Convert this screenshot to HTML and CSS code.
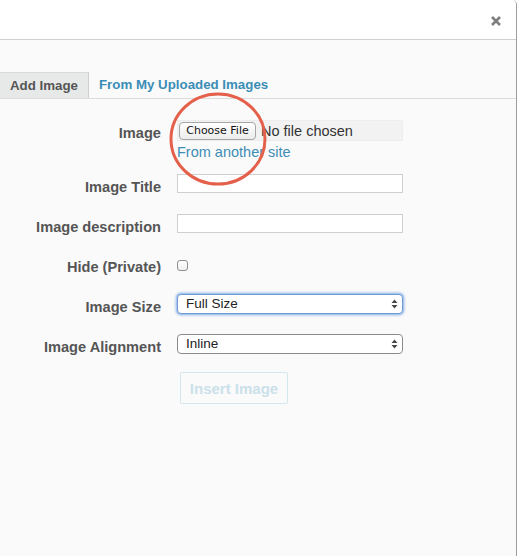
FILE: index.html
```html
<!DOCTYPE html>
<html>
<head>
<meta charset="utf-8">
<link rel="stylesheet" href="styles.css">
</head>
<body>
<div class="modal">
  <div class="modal-header">
    <svg class="close" width="10" height="10" viewBox="0 0 10 10"><path d="M1 1 L9 9 M9 1 L1 9" stroke="#7f7f7f" stroke-width="2.6" stroke-linecap="butt"/></svg>
  </div>
  <div class="modal-body">
    <div class="tabs">
      <div class="tab active">Add Image</div>
      <div class="tab">From My Uploaded Images</div>
    </div>
    <div class="form">
      <div class="row row-image">
        <div class="label">Image</div>
        <div class="control">
          <div class="filebox">
            <span class="choose">Choose File</span>
            <span class="nofile">No file chosen</span>
          </div>
          <a class="link">From another site</a>
        </div>
      </div>
      <div class="row">
        <div class="label">Image Title</div>
        <div class="control"><div class="text-input"></div></div>
      </div>
      <div class="row">
        <div class="label">Image description</div>
        <div class="control"><div class="text-input"></div></div>
      </div>
      <div class="row">
        <div class="label">Hide (Private)</div>
        <div class="control"><span class="checkbox"></span></div>
      </div>
      <div class="row">
        <div class="label">Image Size</div>
        <div class="control">
          <div class="select focused">
            <span>Full Size</span>
            <svg class="arrows" width="7" height="10" viewBox="0 0 7 10"><path d="M3.5 0.5 L6.5 4 L0.5 4 Z M3.5 9.5 L6.5 6 L0.5 6 Z" fill="#444"/></svg>
          </div>
        </div>
      </div>
      <div class="row">
        <div class="label">Image Alignment</div>
        <div class="control">
          <div class="select">
            <span>Inline</span>
            <svg class="arrows" width="7" height="10" viewBox="0 0 7 10"><path d="M3.5 0.5 L6.5 4 L0.5 4 Z M3.5 9.5 L6.5 6 L0.5 6 Z" fill="#444"/></svg>
          </div>
        </div>
      </div>
      <div class="actions">
        <button class="insert" disabled>Insert Image</button>
      </div>
    </div>
    <svg class="circle" width="104" height="100" viewBox="0 0 104 100"><ellipse cx="52" cy="50" rx="47" ry="45" fill="none" stroke="#e4604b" stroke-width="3"/></svg>
  </div>
</div>
</body>
</html>
```

FILE: styles.css
```css
html, body {
  margin: 0;
  padding: 0;
  background: #fff;
  font-family: "Liberation Sans", Arial, sans-serif;
}

.modal {
  width: 516px;
  height: 556px;
  border-right: 1px solid #9c9c9c;
  border-top-right-radius: 5px;
  background: #fafafa;
  overflow: hidden;
}

.modal-header {
  height: 39px;
  background: #fff;
  border-bottom: 1px solid #cfcfcf;
  display: flex;
  justify-content: flex-end;
  align-items: flex-start;
}

.close {
  margin-top: 16px;
  margin-right: 15px;
}

.modal-body {
  position: relative;
  padding-top: 32px;
}

.tabs {
  display: flex;
  height: 26px;
  border-bottom: 1px solid #dcdcdc;
}

.tab {
  font-size: 13.3px;
  font-weight: bold;
  line-height: 26px;
  padding: 0 11px 0 10px;
  color: #3a8db6;
}

.tab.active {
  color: #555;
  background: #e7e8e8;
  border-top: 1px solid #d8d8d8;
  border-right: 1px solid #d0d0d0;
  line-height: 25px;
  height: 25px;
  padding: 0 10px 0 10px;
}

.form {
  padding-top: 21px;
}

.row {
  display: flex;
  align-items: flex-start;
  height: 20px;
  margin-bottom: 20px;
}

.row-image {
  height: auto;
  margin-bottom: 13px;
}

.label {
  width: 161px;
  margin-right: 16px;
  text-align: right;
  font-size: 14.6px;
  font-weight: bold;
  color: #555;
  line-height: 16px;
  padding-top: 5px;
}

.control {
  width: 226px;
}

.filebox {
  height: 21px;
  background: #f2f2f2;
  border: 1px solid #ededed;
  box-sizing: border-box;
  display: flex;
  align-items: center;
}

.choose {
  margin-left: 1px;
  height: 18px;
  box-sizing: border-box;
  width: 77px;
  border: 1px solid #a6a6a6;
  border-radius: 4px;
  background: linear-gradient(#ffffff, #ececec);
  color: #111;
  line-height: 16px;
  text-align: center;
  font-family: "DejaVu Sans", "Liberation Sans", sans-serif;
  font-size: 11px;
}

.nofile {
  margin-left: 5px;
  font-size: 14.5px;
  color: #333;
}

.link {
  display: block;
  margin-top: 2px;
  font-size: 14.5px;
  line-height: 18px;
  color: #3d8db5;
}

.text-input {
  height: 19px;
  box-sizing: border-box;
  background: #fff;
  border: 1px solid #cfcfcf;
}

.checkbox {
  display: block;
  width: 11px;
  height: 11px;
  box-sizing: border-box;
  border: 1px solid #8e8e8e;
  border-radius: 3px;
  background: linear-gradient(#ffffff, #efefef);
  margin-top: 6px;
}

.select {
  position: relative;
  height: 20px;
  box-sizing: border-box;
  border: 1px solid #8a8a8a;
  border-radius: 4px;
  background: #fff;
  font-size: 13.5px;
  color: #222;
  line-height: 18px;
  padding-left: 8px;
}

.select.focused {
  border-color: #6f9ad4;
  box-shadow: 0 0 0 1px #a9c6ee, 0 0 3px 1px #86aee6;
}

.arrows {
  position: absolute;
  right: 4px;
  top: 4px;
}

.actions {
  padding-left: 180px;
  margin-top: -2px;
}

.insert {
  width: 108px;
  height: 32px;
  background: #fafafa;
  border: 1px solid #d2e6ee;
  border-radius: 2px;
  font-family: "Liberation Sans", Arial, sans-serif;
  font-size: 15px;
  font-weight: bold;
  color: #cbe1ea;
  padding: 0;
}

.circle {
  position: absolute;
  left: 166px;
  top: 49px;
}
```
